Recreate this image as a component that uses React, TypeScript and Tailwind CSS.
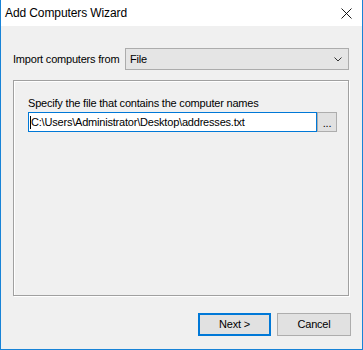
export default function App() {
  const font = { fontFamily: '"Liberation Sans", Arial, sans-serif' };
  return (
    <div
      className="w-[363px] h-[350px] flex flex-col bg-[#f0f0f0] border-x border-b border-[#1883d7] text-[11px] tracking-[-0.2px] text-black"
      style={font}
    >
      <div className="h-[26px] bg-white flex items-center justify-between pl-[4px] pr-[10px]">
        <span className="text-[12px] tracking-[-0.1px] text-black">Add Computers Wizard</span>
        <svg width="11" height="11" viewBox="0 0 11 11" className="mt-[1px]">
          <path d="M0.5 0.5 L10.5 10.5 M10.5 0.5 L0.5 10.5" stroke="#000" strokeWidth="0.9" />
        </svg>
      </div>

      <div className="flex-1 flex flex-col pl-[12px] pr-[13px]">
        <div className="flex items-center mt-[22px] h-[22px]">
          <span className="w-[112px] leading-[13px]">Import computers from</span>
          <div className="flex-1 h-[22px] bg-[#e5e5e5] border border-[#acacac] flex items-center justify-between pl-[4px] pr-[6px]">
            <span>File</span>
            <svg width="8" height="5" viewBox="0 0 8 5">
              <path d="M0.5 0.5 L4 4 L7.5 0.5" stroke="#333" fill="none" strokeWidth="1" />
            </svg>
          </div>
        </div>

        <div className="mt-[10px] w-[336px] h-[216px] border border-[#a0a0a0] shadow-[inset_1px_1px_0_#fff,1px_1px_0_#fff] pl-[14px] pt-[16px]">
          <div className="leading-[13px]">Specify the file that contains the computer names</div>
          <div className="flex mt-[2px]">
            <div className="w-[289px] h-[20px] bg-white border border-[#0078d7] flex items-center pl-[1px]">
              <span className="w-px h-[13px] bg-black" />
              <span>C:\Users\Administrator\Desktop\addresses.txt</span>
            </div>
            <div className="w-[20px] h-[20px] bg-[#e1e1e1] border border-[#adadad] flex items-center justify-center leading-none pt-[2px]">
              ...
            </div>
          </div>
        </div>

        <div className="flex justify-end gap-[6px] mt-[17px]">
          <button className="w-[73px] h-[23px] bg-[#e1e1e1] border-2 border-[#0078d7] flex items-center justify-center">
            Next &gt;
          </button>
          <button className="w-[74px] h-[23px] bg-[#e1e1e1] border border-[#adadad] flex items-center justify-center mr-[-2px]">
            Cancel
          </button>
        </div>
      </div>
    </div>
  );
}
